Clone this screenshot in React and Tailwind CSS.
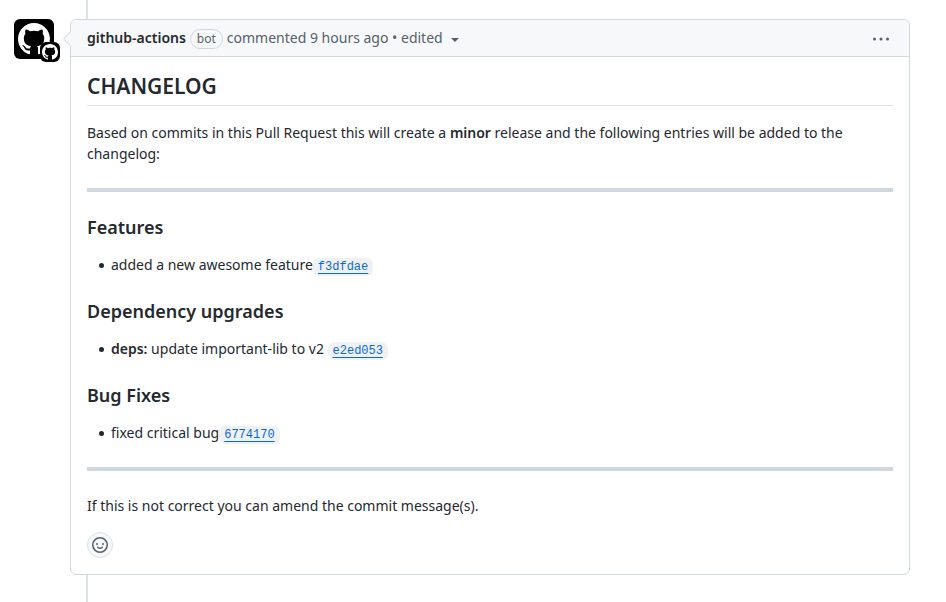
const MARK =
  "M8 0C3.58 0 0 3.58 0 8c0 3.54 2.29 6.53 5.47 7.59.4.07.55-.17.55-.38 0-.19-.01-.82-.01-1.49-2.01.37-2.53-.49-2.69-.94-.09-.23-.48-.94-.82-1.13-.28-.15-.68-.52-.01-.53.63-.01 1.08.58 1.23.82.72 1.21 1.87.87 2.33.66.07-.52.28-.87.51-1.07-1.78-.2-3.64-.89-3.64-3.95 0-.87.31-1.59.82-2.15-.08-.2-.36-1.02.08-2.12 0 0 .67-.21 2.2.82.64-.18 1.32-.27 2-.27s1.36.09 2 .27c1.53-1.04 2.2-.82 2.2-.82.44 1.1.16 1.92.08 2.12.51.56.82 1.27.82 2.15 0 3.07-1.87 3.75-3.65 3.95.29.25.54.73.54 1.48 0 1.07-.01 1.93-.01 2.2 0 .21.15.46.55.38A8.01 8.01 0 0 0 16 8c0-4.42-3.58-8-8-8z";

function Mark({ className }) {
  return (
    <svg viewBox="0 0 16 16" fill="currentColor" aria-hidden="true" className={className}>
      <path d={MARK} />
    </svg>
  );
}

function Avatar() {
  return (
    <div className="relative mt-[19px] h-10 w-10 shrink-0">
      <a href="#profile" aria-label="github-actions" className="flex h-10 w-10 items-center justify-center rounded-md bg-black text-white">
        <Mark className="h-8 w-8" />
      </a>
      <span className="absolute left-[26px] top-[23px] flex h-5 w-5 items-center justify-center rounded-md bg-black text-white">
        <Mark className="h-4 w-4" />
      </span>
    </div>
  );
}

function Section({ title, children }) {
  return (
    <section>
      <h3 className="mb-4 text-[18px] font-semibold leading-[22px]">{title}</h3>
      <ul className="pl-3">
        <li className="flex items-center gap-[7px]">
          <span className="mt-[2px] h-[5px] w-[5px] shrink-0 rounded-full bg-[#24292f]" />
          <p>{children}</p>
        </li>
      </ul>
    </section>
  );
}

function Commit({ sha }) {
  return (
    <a href={`#${sha}`} className="text-[#0969da] underline underline-offset-[3px]">
      <code className="rounded-md bg-[#eff1f3] px-[5px] py-[2px] font-['Liberation_Mono',monospace] text-[12px] leading-none">
        {sha}
      </code>
    </a>
  );
}

function Header() {
  return (
    <header className="relative flex h-[37px] items-center justify-between rounded-t-md border-b border-[#cfd8df] bg-[#f6f8fa] px-4 text-[#57606a]">
      <svg viewBox="0 0 8 16" className="absolute -left-2 top-[11px] h-4 w-2" aria-hidden="true">
        <path d="M8 0L0 8l8 8z" fill="#f6f8fa" />
        <path d="M8 0L.7 8 8 16" fill="none" stroke="#cfd8df" />
      </svg>
      <div className="flex items-baseline gap-1">
        <a href="#profile" className="font-semibold text-[#24292f]">github-actions</a>
        <span className="rounded-full border border-[#cfd8df] px-[6px] text-[12px] leading-[18px]">bot</span>
        <span>commented 9 hours ago • edited</span>
        <button aria-label="Edit history" className="ml-1 self-center pt-1">
          <svg viewBox="0 0 8 4" className="h-1 w-2" fill="currentColor" aria-hidden="true">
            <path d="M0 0h8L4 4z" />
          </svg>
        </button>
      </div>
      <button aria-label="Show options" className="mr-1 mt-[2px]">
        <svg viewBox="0 0 16 4" className="h-1 w-4" fill="currentColor" aria-hidden="true">
          <circle cx="1.5" cy="2" r="1.5" />
          <circle cx="8" cy="2" r="1.5" />
          <circle cx="14.5" cy="2" r="1.5" />
        </svg>
      </button>
    </header>
  );
}

export default function App() {
  return (
    <main className="flex min-h-screen gap-4 bg-white pl-[14px] pr-9 font-['Noto_Sans',sans-serif] text-[14px] leading-[21px] text-[#24292f]">
      <Avatar />
      <div className="flex min-w-0 flex-1 flex-col">
        <div className="ml-4 h-[19px] w-[2px] bg-[#dce1e5]" />
        <article className="rounded-md border border-[#cfd8df]">
          <Header />
          <div className="p-4">
            <h2 className="mb-4 border-b border-[#dce1e5] pb-[6px] text-[21px] font-semibold leading-[26px]">CHANGELOG</h2>
            <p>
              Based on commits in this Pull Request this will create a <strong className="font-semibold">minor</strong> release and the
              following entries will be added to the changelog:
            </p>
            <hr className="my-6 h-1 border-0 bg-[#cfd8df]" />
            <div className="flex flex-col gap-[25px]">
              <Section title="Features">
                added a new awesome feature<Commit sha="f3dfdae" />
              </Section>
              <Section title="Dependency upgrades">
                <strong className="font-semibold">deps:</strong> update important-lib to v2 <Commit sha="e2ed053" />
              </Section>
              <Section title="Bug Fixes">
                fixed critical bug<Commit sha="6774170" />
              </Section>
            </div>
            <hr className="my-6 h-1 border-0 bg-[#cfd8df]" />
            <p>If this is not correct you can amend the commit message(s).</p>
            <button
              aria-label="Add reaction"
              className="mt-4 flex h-[26px] w-[26px] items-center justify-center rounded-full border border-[#dce1e5] bg-[#f6f8fa] text-[#57606a]"
            >
              <svg viewBox="0 0 16 16" className="h-4 w-4" fill="currentColor" aria-hidden="true">
                <path
                  fillRule="evenodd"
                  d="M1.5 8a6.5 6.5 0 1 1 13 0 6.5 6.5 0 0 1-13 0zM8 0a8 8 0 1 0 0 16A8 8 0 0 0 8 0zM5 8a1 1 0 1 0 0-2 1 1 0 0 0 0 2zm7-1a1 1 0 1 1-2 0 1 1 0 0 1 2 0zM5.32 9.636a.75.75 0 0 1 1.038.175l.007.009c.103.118.22.222.35.31.264.178.683.37 1.285.37.602 0 1.02-.192 1.285-.371.13-.088.247-.192.35-.31l.007-.008a.75.75 0 0 1 1.222.87l-.614-.431c.614.43.614.431.613.431v.001l-.001.002-.002.003-.005.007-.014.019a1.984 1.984 0 0 1-.184.213c-.16.166-.338.316-.53.445-.63.418-1.37.638-2.127.629-.946 0-1.652-.308-2.126-.63a3.331 3.331 0 0 1-.715-.657l-.014-.02-.005-.006-.002-.003v-.002h-.001l.613-.432-.614.43a.75.75 0 0 1 .183-1.044z"
                />
              </svg>
            </button>
          </div>
        </article>
        <div className="ml-4 w-[2px] flex-1 bg-[#dce1e5]" />
      </div>
    </main>
  );
}
